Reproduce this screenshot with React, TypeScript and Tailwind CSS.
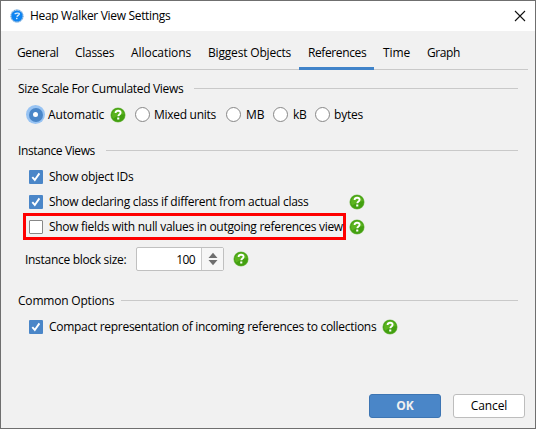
import type { ReactNode } from 'react';

function HelpIcon({ className = '' }: { className?: string }) {
  return (
    <svg className={`block size-4 shrink-0 ${className}`} viewBox="0 0 16 16">
      <circle cx="8" cy="8" r="7.6" fill="#8cc46a" />
      <circle cx="8" cy="8" r="7" fill="#43a010" />
      <path d="M2 8.6a6 6 0 0 1 12-1.2C10 7 6 10 3.2 11.5A6 6 0 0 1 2 8.6z" fill="#5cb41f" />
      <path
        d="M5.6 6.1C5.6 4.5 6.7 3.8 8.1 3.8c1.5 0 2.5.8 2.5 2 0 1.7-2.3 1.8-2.3 3.5"
        fill="none"
        stroke="#fff"
        strokeWidth="1.9"
      />
      <rect x="7.2" y="10.5" width="2.1" height="2" fill="#fff" />
    </svg>
  );
}

function AppIcon() {
  return (
    <svg className="ml-[9px] block size-[14px] shrink-0" viewBox="0 0 14 14">
      <circle cx="7" cy="7" r="6.7" fill="#b4d3f0" />
      <circle cx="7" cy="7" r="5.6" fill="#0d84f2" />
      <circle cx="7" cy="7" r="5.9" fill="none" stroke="#4a90d6" strokeWidth="1" strokeDasharray="1.2 1.2" />
      <path d="M4.6 5c1.6-1 4.4-1.2 4.8-.3.3 1-2 1.6-2.5 3" fill="none" stroke="#d6ecff" strokeWidth="1.4" />
      <rect x="6" y="8.8" width="1.5" height="1.4" fill="#d6ecff" />
    </svg>
  );
}

function Checkbox({ checked = false }: { checked?: boolean }) {
  return (
    <span
      className={`flex size-[14px] shrink-0 items-center justify-center rounded-[1px] ${
        checked ? 'bg-[#4a86c8]' : 'border border-[#878787] bg-white'
      }`}
    >
      {checked && (
        <svg className="block size-[14px]" viewBox="0 0 14 14">
          <path d="M3.3 7.2l2.5 2.8L10.4 3.4" fill="none" stroke="#fff" strokeWidth="1.9" />
        </svg>
      )}
    </span>
  );
}

function Radio({ className = '' }: { className?: string }) {
  return <span className={`size-[15px] shrink-0 rounded-full border border-[#878787] bg-white ${className}`} />;
}

function Heading({ children, width }: { children: ReactNode; width: string }) {
  return (
    <div className="flex h-[18px] items-center pr-[17px] pl-[17px]">
      <span className={`shrink-0 ${width}`}>{children}</span>
      <span className="-mt-px h-px grow bg-[#c9c9c9]" />
    </div>
  );
}

const tabs = [
  { label: 'General', cls: 'w-[58px] tracking-[-0.4px]' },
  { label: 'Classes', cls: 'w-[56px] tracking-[-0.28px]' },
  { label: 'Allocations', cls: 'w-[77px] tracking-[-0.06px]' },
  { label: 'Biggest Objects', cls: 'w-[100px] tracking-[-0.18px]' },
  { label: 'References', cls: 'w-[75px] tracking-[-0.39px]', active: true },
  { label: 'Time', cls: 'w-[44px] tracking-[-0.1px]' },
  { label: 'Graph', cls: 'w-[51px] tracking-[-0.4px]' },
];

export default function App() {
  return (
    <div className="flex h-[429px] w-[536px] flex-col overflow-hidden border border-[#6f6f6f] bg-[#f1f1f1] font-['Open_Sans','Noto_Sans',sans-serif] text-[12px] leading-[18px] whitespace-nowrap text-black">
      <header className="flex h-[30px] shrink-0 items-center bg-white">
        <AppIcon />
        <h1 className="ml-[6px] tracking-[-0.32px]">Heap Walker View Settings</h1>
        <svg className="mr-[9px] mb-px ml-auto block size-[12px]" viewBox="0 0 12 12">
          <path d="M1 1l10 10M11 1L1 11" stroke="#111" strokeWidth="1.1" />
        </svg>
      </header>

      <nav className="mx-[7px] flex h-[39px] shrink-0 border-b border-[#c9c9c9]">
        {tabs.map((t) => (
          <div
            key={t.label}
            className={`-mb-px h-[39px] pt-[13px] pl-[9px] ${t.cls} ${t.active ? 'border-b-[3px] border-[#4083c9]' : ''}`}
          >
            {t.label}
          </div>
        ))}
      </nav>

      <section className="mt-[10px]">
        <Heading width="w-[176px] tracking-[-0.32px]">Size Scale For Cumulated Views</Heading>
        <div className="mt-[7px] flex h-[19px] items-center pl-[25px]">
          <span className="flex size-[19px] shrink-0 items-center justify-center rounded-full bg-[#97c3f3]">
            <span className="flex size-[14px] items-center justify-center rounded-full bg-[#4a86c8]">
              <span className="size-[5px] rounded-full bg-white" />
            </span>
          </span>
          <span className="ml-[3px] w-[62px] tracking-[-0.12px]">Automatic</span>
          <HelpIcon />
          <Radio className="ml-[9px]" />
          <span className="ml-[4px] w-[72px] tracking-[-0.28px]">Mixed units</span>
          <Radio />
          <span className="ml-[5px] w-[27px]">MB</span>
          <Radio />
          <span className="ml-[5px] w-[22px] tracking-[-0.2px]">kB</span>
          <Radio />
          <span className="ml-[4px] tracking-[-0.2px]">bytes</span>
        </div>
      </section>

      <section className="mt-[18px]">
        <Heading width="w-[88px] tracking-[-0.38px]">Instance Views</Heading>
        <div className="mt-[4px] flex h-[25px] items-center pl-[28px]">
          <Checkbox checked />
          <span className="ml-[6px] tracking-[-0.3px]">Show object IDs</span>
        </div>
        <div className="flex h-[25px] items-center pl-[28px]">
          <Checkbox checked />
          <span className="ml-[6px] w-[300px] tracking-[-0.285px]">
            Show declaring class if different from actual class
          </span>
          <HelpIcon />
        </div>
        <div className="flex h-[25px] items-center pl-[22px]">
          <div className="-my-px flex h-[27px] w-[323px] shrink-0 items-center border-[3px] border-[#fe0000] pl-[3px]">
            <Checkbox />
            <span className="ml-[6px] tracking-[-0.29px]">Show fields with null values in outgoing references view</span>
          </div>
          <HelpIcon className="ml-[3px]" />
        </div>
        <div className="mt-[8px] flex h-[24px] items-center pl-[24px]">
          <span className="w-[111px] pt-[2px] tracking-[-0.3px]">Instance block size:</span>
          <div className="flex h-[24px] w-[88px] rounded-[2px] border border-[#c0c0c0] bg-white">
            <span className="grow pt-[3px] pr-[6px] text-right tracking-[-0.6px]">100</span>
            <span className="flex w-[22px] items-center justify-center border-l border-[#c9c9c9] bg-[#f6f6f6]">
              <svg className="block h-[14px] w-[10px]" viewBox="0 0 10 14">
                <path d="M5 .8L9.5 6h-9zM5 13.2L9.5 8h-9z" fill="#6e6e6e" />
              </svg>
            </span>
          </div>
          <HelpIcon className="ml-[9px]" />
        </div>
      </section>

      <section className="mt-[21px]">
        <Heading width="w-[103px] tracking-[-0.2px]">Common Options</Heading>
        <div className="mt-[4px] flex h-[25px] items-center pl-[28px]">
          <Checkbox checked />
          <span className="ml-[6px] w-[333px] tracking-[-0.29px]">
            Compact representation of incoming references to collections
          </span>
          <HelpIcon />
        </div>
      </section>

      <footer className="mt-auto mb-[10px] flex justify-end gap-[12px] pr-[10px]">
        <button className="h-[24px] w-[72px] rounded-[3px] border border-[#3d75b3] bg-[#4a86c8] font-bold text-[#f0f0f0]">
          OK
        </button>
        <button className="h-[24px] w-[72px] rounded-[3px] border border-[#bdbdbd] bg-white tracking-[-0.1px]">Cancel</button>
      </footer>
    </div>
  );
}
